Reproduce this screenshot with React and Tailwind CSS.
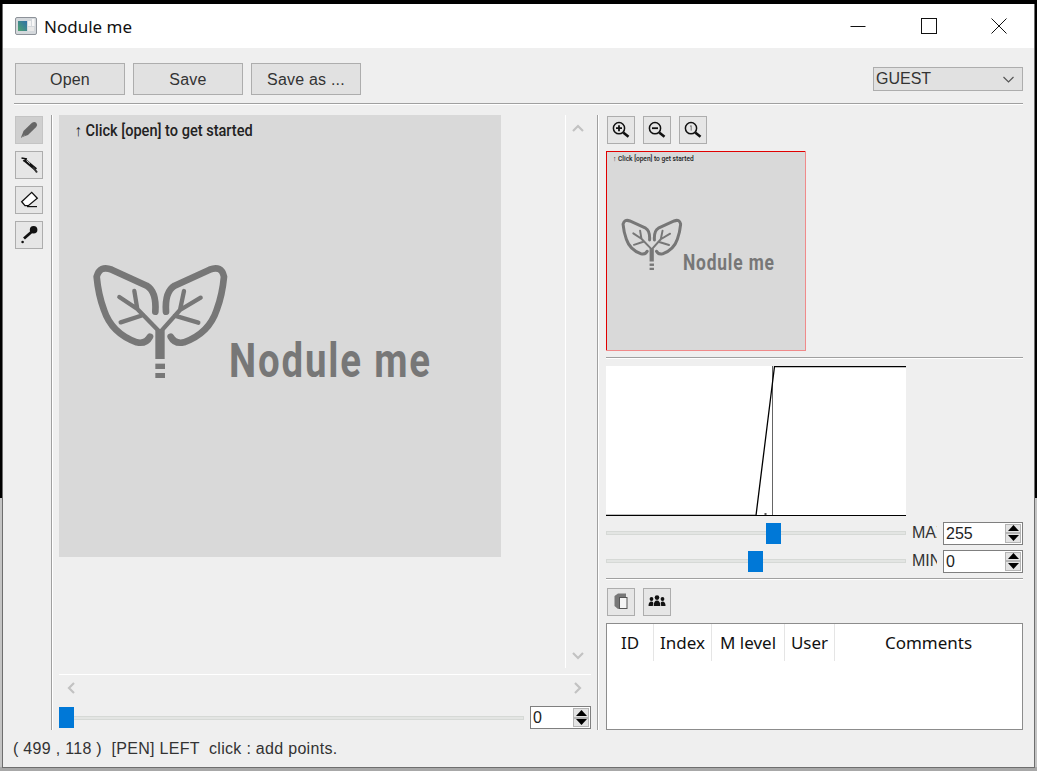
const ui = { fontFamily: '"Liberation Sans", sans-serif' };

function Sep({ className = "" }) {
  return <div className={"h-[2px] border-t border-[#a0a0a0] bg-white " + className} />;
}
function VSep({ className = "" }) {
  return <div className={"w-[2px] border-l border-[#a0a0a0] bg-white " + className} />;
}

function IconButton({ children, active }) {
  return (
    <div className={"w-[28px] h-[28px] border flex items-center justify-center shrink-0 " + (active ? "bg-[#cfcfcf] border-[#c4c4c4]" : "bg-[#e6e6e6] border-[#adadad]")}>
      {children}
    </div>
  );
}
const Svg = ({ children }) => <svg width="26" height="26" viewBox="0 0 26 26">{children}</svg>;

function PenIcon() {
  return (
    <Svg>
      <path d="M5 20.5 L7.5 14 L16 5.8 Q18.6 4 20.4 6 Q22 8 20.2 10 L12 18 Z" fill="#666" />
      <path d="M5 20.5 L9 18" stroke="#8a8a8a" strokeWidth="1" />
    </Svg>
  );
}
function BrushIcon() {
  return (
    <Svg>
      <path d="M5.5 6 L11 7" stroke="#111" strokeWidth="1.5" />
      <path d="M7 9 L10 7.5" stroke="#111" strokeWidth="1.2" />
      <path d="M8.5 8 L20 17.5" stroke="#111" strokeWidth="3.2" />
      <path d="M10.5 8.6 L14 11.6" stroke="#fff" strokeWidth="0.8" />
      <path d="M17 15 L21 20.5" stroke="#333" strokeWidth="2" />
    </Svg>
  );
}
function EraserIcon() {
  return (
    <Svg>
      <path d="M5.7 14.7 L15.7 5.3 L21.3 11.3 L12.3 18.7 L9 18.7 Z" fill="#fff" stroke="#111" strokeWidth="1.3" />
      <path d="M11 19.6 L21 19.6" stroke="#111" strokeWidth="1.2" />
    </Svg>
  );
}
function DropperIcon() {
  return (
    <Svg>
      <circle cx="17.6" cy="7.8" r="3.8" fill="#111" />
      <path d="M16 9.5 L8 16.5" stroke="#111" strokeWidth="2.8" />
      <circle cx="6.6" cy="20" r="1.3" fill="#111" />
    </Svg>
  );
}
function ZoomIcon({ kind }) {
  return (
    <Svg>
      <circle cx="11" cy="11.2" r="5.6" fill="none" stroke="#111" strokeWidth="1.5" />
      <path d="M15.2 15.4 L20.5 19.7" stroke="#111" strokeWidth="2.6" />
      {kind === "plus" && <path d="M8 11.2 H14 M11 8.2 V14.2" stroke="#111" strokeWidth="1.8" />}
      {kind === "minus" && <path d="M8 11.2 H14" stroke="#111" strokeWidth="1.8" />}
      {kind === "one" && <path d="M10 9.4 L11.2 8.6 V13.6" fill="none" stroke="#555" strokeWidth="0.8" />}
    </Svg>
  );
}
function CopyIcon() {
  return (
    <Svg>
      <path d="M6.5 7 L10 4.5 L18 4.5 L18 8 L12 8 L12 19.5 L10 20 L6.5 17 Z" fill="#777" />
      <rect x="11.5" y="8.5" width="7.5" height="11" fill="#f4f4f4" stroke="#555" strokeWidth="1" />
    </Svg>
  );
}
function GroupIcon() {
  return (
    <Svg>
      <circle cx="13" cy="8.6" r="2.3" fill="#111" />
      <path d="M9.7 17 Q9.7 11.5 13 11.5 Q16.3 11.5 16.3 17 Z" fill="#111" />
      <circle cx="7.5" cy="10" r="1.9" fill="#111" />
      <path d="M4.5 17 Q4.5 12.5 7.5 12.5 Q9.3 12.5 9.3 14 L8.8 17 Z" fill="#111" />
      <circle cx="18.5" cy="10" r="1.9" fill="#111" />
      <path d="M21.5 17 Q21.5 12.5 18.5 12.5 Q16.7 12.5 16.7 14 L17.2 17 Z" fill="#111" />
    </Svg>
  );
}

function Chevron({ dir }) {
  const d = {
    up: "M1 8 L6 3 L11 8",
    down: "M1 4 L6 9 L11 4",
    left: "M8 1 L3 6 L8 11",
    right: "M4 1 L9 6 L4 11",
  }[dir];
  return (
    <svg width="12" height="12" viewBox="0 0 12 12" className="block">
      <path d={d} fill="none" stroke="#c2c2c2" strokeWidth="2.2" />
    </svg>
  );
}

function Spin({ value, className }) {
  return (
    <div className={"h-[23px] border border-[#7f7f7f] bg-white flex items-stretch " + className} style={ui}>
      <div className="flex-1 pl-[2px] text-[16px] leading-[21px] text-[#222]">{value}</div>
      <div className="w-[16px] my-[1px] mr-[1px] flex flex-col">
        <div className="h-[10px] bg-[#e3e3e3] border border-[#b5b5b5] flex items-center justify-center">
          <svg width="11" height="6" viewBox="0 0 11 6"><path d="M5.5 0 L11 6 H0 Z" fill="#000" /></svg>
        </div>
        <div className="h-[10px] bg-[#e3e3e3] border border-[#b5b5b5] flex items-center justify-center">
          <svg width="11" height="6" viewBox="0 0 11 6"><path d="M5.5 6 L11 0 H0 Z" fill="#000" /></svg>
        </div>
      </div>
    </div>
  );
}

function Slider({ className, thumb }) {
  return (
    <div className={"relative h-[21px] flex items-center " + className}>
      <div className="w-full h-[4px] bg-[#e3e5e3] border border-[#d6d9d6]" />
      <div className={"absolute top-0 w-[15px] h-[21px] bg-[#0078d7] " + thumb} />
    </div>
  );
}

function Logo() {
  return (
    <svg width="148" height="130" viewBox="0 0 444 390" className="shrink-0">
      <g fill="none" stroke="#777" strokeLinecap="round" strokeLinejoin="round">
        <path strokeWidth="20" d="M226 170 Q230 110 200 92 L95 44 Q60 30 50 65 Q55 120 72 165 Q95 235 170 262 Q198 268 210 245" />
        <path strokeWidth="20" d="M258 170 Q254 110 284 92 L389 44 Q424 30 432 65 Q427 120 410 165 Q387 235 312 262 Q284 268 272 245" />
        <path strokeWidth="13" d="M240 232 L172 162 L163 108 M172 162 L118 126 M190 180 L122 202" />
        <path strokeWidth="13" d="M240 232 L300 165 L312 108 M300 165 L362 128 M284 182 L355 203" />
      </g>
      <path d="M226 225 L240 236 L254 225 V312 H226 Z" fill="#777" />
      <rect x="226" y="326" width="29" height="16" fill="#777" />
      <rect x="226" y="354" width="29" height="15" fill="#777" />
    </svg>
  );
}

function Splash() {
  return (
    <div className="w-[442px] h-[442px] bg-[#d9d9d9] flex flex-col" style={{ fontFamily: 'Roboto, sans-serif' }}>
      <div className="pt-[7px] pl-[16px] text-[16px] leading-[17px] font-medium text-[#222] whitespace-nowrap origin-left scale-x-[0.91] translate-x-[1px]">
        ↑ Click [open] to get started
      </div>
      <div className="mt-[116px] pl-[21px] flex items-end">
        <Logo />
        <div className="ml-[1px] text-[48px] leading-[48px] font-bold text-[#777] whitespace-nowrap tracking-[2.3px] origin-left scale-x-[0.8]">
          Nodule me
        </div>
      </div>
    </div>
  );
}

function Histogram() {
  return (
    <svg width="300" height="150" viewBox="0 0 300 150" className="block bg-white">
      <path d="M166.5 0 V150" stroke="#666" strokeWidth="1" />
      <path d="M0 149.5 H150 L168.5 0.5 H300" fill="none" stroke="#000" strokeWidth="1.3" />
      <path d="M0 149.5 H300" stroke="#000" strokeWidth="1" />
      <rect x="158.5" y="147" width="2" height="2" fill="#555" />
    </svg>
  );
}

const cols = [
  ["ID", "w-[47px]"],
  ["Index", "w-[58px]"],
  ["M level", "w-[73px]"],
  ["User", "w-[50px]"],
  ["Comments", "flex-1"],
];

export default function App() {
  return (
    <div className="w-[1037px] h-[771px] overflow-hidden pt-[4px] pl-[2px] bg-[linear-gradient(to_bottom,#000_0,#000_498px,#c4c4c4_498px,#c4c4c4_767px,#a8a8a8_767px)]">
      <div className="w-[1033px] h-[764px] border-x border-b border-[#6e6e6e] bg-[#efefef] flex flex-col">
        {/* title bar */}
        <div className="h-[44px] bg-white flex items-center shrink-0">
          <svg width="22" height="18" viewBox="0 0 22 18" className="ml-[12px]">
            <defs>
              <linearGradient id="tg" x1="0" y1="1" x2="1" y2="0">
                <stop offset="0" stopColor="#4fa36f" />
                <stop offset="1" stopColor="#2f6fa8" />
              </linearGradient>
            </defs>
            <rect x="0.5" y="0.5" width="21" height="17" rx="1.5" fill="#d4d8dc" stroke="#8d9299" />
            <rect x="3" y="4" width="9" height="10" fill="url(#tg)" />
            <rect x="13" y="4" width="3" height="5" fill="#f3f3f3" />
            <rect x="17" y="2" width="2.5" height="7" fill="#f7f7f7" />
            <rect x="13" y="10" width="6" height="4" fill="#e8e8e8" />
          </svg>
          <div className="ml-[7px] pt-[1px] text-[17px] text-[#111]" style={{ fontFamily: '"Noto Sans", sans-serif' }}>Nodule me</div>
          <div className="ml-auto flex items-center">
            <div className="w-[71px] h-[44px] flex items-center justify-center">
              <svg width="16" height="16" viewBox="0 0 16 16"><path d="M0.5 8.5 H15.5" stroke="#111" /></svg>
            </div>
            <div className="w-[71px] h-[44px] flex items-center justify-center">
              <svg width="16" height="16" viewBox="0 0 16 16"><rect x="0.5" y="0.5" width="15" height="15" fill="none" stroke="#111" /></svg>
            </div>
            <div className="w-[70px] h-[44px] flex items-center justify-center">
              <svg width="16" height="16" viewBox="0 0 16 16"><path d="M0.5 0.5 L15.5 15.5 M15.5 0.5 L0.5 15.5" stroke="#111" /></svg>
            </div>
          </div>
        </div>

        {/* toolbar */}
        <div className="pt-[15px] pl-[12px] pr-[11px] flex items-center gap-[8px]" style={ui}>
          {["Open", "Save", "Save as ..."].map((t) => (
            <div key={t} className="w-[110px] h-[32px] bg-[#e1e1e1] border border-[#adadad] flex items-center justify-center text-[16px] text-[#333] tracking-[0.2px] pt-[1px]">
              {t}
            </div>
          ))}
          <div className="ml-auto w-[150px] h-[24px] bg-[#e1e1e1] border border-[#adadad] flex items-center justify-between pl-[2px] pr-[8px] text-[16px] text-[#333]">
            <span>GUEST</span>
            <svg width="11" height="7" viewBox="0 0 11 7"><path d="M0.5 1 L5.5 6 L10.5 1" fill="none" stroke="#555" strokeWidth="1.2" /></svg>
          </div>
        </div>
        <Sep className="mt-[8px] ml-[11px] mr-[11px]" />

        {/* main */}
        <div className="mt-[10px] h-[615px] flex shrink-0">
          <div className="w-[48px] pl-[12px] pt-[1px] flex flex-col gap-[7px] shrink-0">
            <IconButton active><PenIcon /></IconButton>
            <IconButton><BrushIcon /></IconButton>
            <IconButton><EraserIcon /></IconButton>
            <IconButton><DropperIcon /></IconButton>
          </div>
          <VSep />
          <div className="ml-[6px] w-[532px] flex flex-col shrink-0">
            <div className="h-[553px] flex">
              <div className="w-[507px] border-r border-white">
                <Splash />
              </div>
              <div className="flex-1 flex flex-col justify-between items-center pt-[8px] pb-[7px] pr-[1px]">
                <Chevron dir="up" />
                <Chevron dir="down" />
              </div>
            </div>
            <div className="mt-[6px] h-[1px] bg-white" />
            <div className="h-[25px] flex items-center justify-between pl-[7px] pr-[8px]">
              <Chevron dir="left" />
              <Chevron dir="right" />
            </div>
            <div className="mt-[6px] flex items-center">
              <Slider className="w-[465px]" thumb="left-0" />
              <Spin value="0" className="ml-[6px] w-[61px]" />
            </div>
          </div>
          <VSep className="ml-[6px]" />
          <div className="ml-[7px] w-[417px] flex flex-col shrink-0">
            <div className="mt-[1px] ml-[1px] flex gap-[8px]">
              <IconButton><ZoomIcon kind="plus" /></IconButton>
              <IconButton><ZoomIcon kind="minus" /></IconButton>
              <IconButton><ZoomIcon kind="one" /></IconButton>
            </div>
            <div className="mt-[7px] w-[200px] h-[200px] relative overflow-hidden shrink-0">
              <div className="origin-top-left scale-[0.4525]"><Splash /></div>
              <div className="absolute inset-0 border-t border-l border-[#e00000]" />
              <div className="absolute inset-0 border-r border-b border-[#f08a8a]" />
            </div>
            <Sep className="mt-[6px]" />
            <div className="mt-[7px]"><Histogram /></div>
            <div className="mt-[6px] flex items-center h-[22px]" style={ui}>
              <Slider className="w-[300px]" thumb="left-[160px]" />
              <div className="ml-[6px] w-[25px] overflow-hidden whitespace-nowrap text-[16px] text-[#333]">MAX</div>
              <Spin value="255" className="ml-[6px] w-[80px]" />
            </div>
            <div className="mt-[6px] flex items-center h-[22px]" style={ui}>
              <Slider className="w-[300px]" thumb="left-[142px]" />
              <div className="ml-[6px] w-[25px] overflow-hidden whitespace-nowrap text-[16px] text-[#333]">MIN</div>
              <Spin value="0" className="ml-[6px] w-[80px]" />
            </div>
            <Sep className="mt-[6px]" />
            <div className="mt-[8px] ml-[1px] flex gap-[8px]">
              <IconButton><CopyIcon /></IconButton>
              <IconButton><GroupIcon /></IconButton>
            </div>
            <div className="mt-[7px] flex-1 bg-white border border-[#8c8c8c] flex flex-col">
              <div className="h-[37px] flex" style={{ fontFamily: '"Noto Sans", sans-serif' }}>
                {cols.map(([t, w], i) => (
                  <div key={t} className={w + " flex items-center justify-center pt-[1px] text-[17px] text-[#111] " + (i < 4 ? "border-r border-[#e5e5e5]" : "")}>
                    {t}
                  </div>
                ))}
              </div>
            </div>
          </div>
        </div>

        {/* status */}
        <div className="flex-1 pl-[10px] flex items-center whitespace-pre text-[16px] tracking-[0.3px] text-[#333]" style={ui}>
          {"( 499 , 118 )  [PEN] LEFT  click : add points."}
        </div>
      </div>
    </div>
  );
}
